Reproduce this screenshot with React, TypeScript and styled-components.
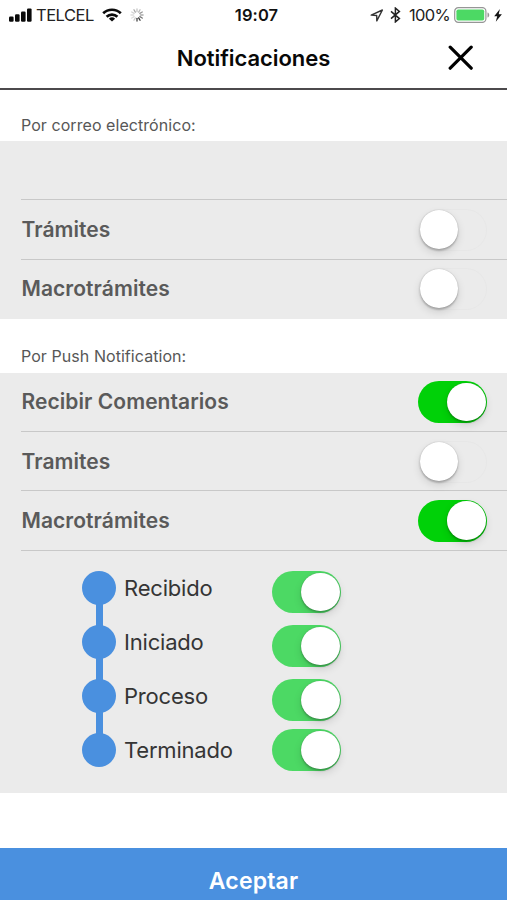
import React, { useState } from 'react';
import styled, { createGlobalStyle } from 'styled-components';

const GlobalStyle = createGlobalStyle`
  * { box-sizing: border-box; }
  body {
    margin: 0;
    background: #fff;
    font-family: Inter, "Liberation Sans", sans-serif;
    overflow: hidden;
  }
  button { font-family: inherit; border: 0; padding: 0; background: none; }
`;

const Screen = styled.main`
  width: 507px;
  height: 900px;
  display: flex;
  flex-direction: column;
  background: #fff;
`;

const StatusBar = styled.div`
  height: 30px;
  flex: none;
  display: grid;
  grid-template-columns: 1fr auto 1fr;
  align-items: center;
  padding: 0 5px 0 8px;
  color: #222;
  font-size: 16.5px;
  line-height: 30px;
`;

const StatusSide = styled.div<{ $end?: boolean }>`
  display: flex;
  align-items: center;
  justify-content: ${(p) => (p.$end ? 'flex-end' : 'flex-start')};
  svg { flex: none; }
`;

const Carrier = styled.span`
  margin: 0 8px 0 3px;
  width: 58px;
  letter-spacing: -0.5px;
`;

const Clock = styled.span`
  color: #111;
  font-weight: 600;
  font-size: 16.5px;
  letter-spacing: 0.1px;
  padding-left: 3px;
`;

const Percent = styled.span`
  width: 40px;
  margin: 0 5px 0 8px;
  letter-spacing: -0.65px;
  white-space: nowrap;
`;

const Header = styled.header`
  height: 60px;
  flex: none;
  display: grid;
  grid-template-columns: 60px 1fr 60px;
  align-items: center;
  border-bottom: 2px solid #4c4a4c;
  padding-bottom: 2px;
`;

const Title = styled.h1`
  grid-column: 2;
  margin: 0;
  text-align: center;
  font-size: 22px;
  line-height: 30px;
  font-weight: 600;
  color: #080808;
  letter-spacing: -0.06px;
`;

const CloseButton = styled.button`
  width: 26px;
  height: 26px;
  margin-left: 1px;
  svg { display: block; }
`;

const SectionLabel = styled.h2<{ $height: number; $bottom: number }>`
  height: ${(p) => p.$height}px;
  flex: none;
  display: flex;
  align-items: flex-end;
  margin: 0;
  padding: 0 21px ${(p) => p.$bottom}px;
  font-size: 16px;
  line-height: 20px;
  font-weight: 400;
  color: #575757;
  letter-spacing: 0.06px;
`;

const Panel = styled.section`
  flex: none;
  background: #ebebeb;
`;

const Row = styled.div<{ $height: number; $top?: number; $bottom?: number; $last?: boolean }>`
  height: ${(p) => p.$height}px;
  margin-left: 21px;
  padding: ${(p) => p.$top ?? 0}px 20px ${(p) => p.$bottom ?? 0}px 0.5px;
  display: flex;
  align-items: center;
  justify-content: space-between;
  border-bottom: ${(p) => (p.$last ? '0' : '1px solid #c8c8c8')};
`;

const RowText = styled.span`
  font-size: 21px;
  line-height: 26px;
  font-weight: 600;
  color: #5a5a5a;
  letter-spacing: 0.06px;
`;

const Track = styled.button<{ $on: boolean; $color: string }>`
  width: 69px;
  height: 42px;
  flex: none;
  display: flex;
  align-items: center;
  justify-content: ${(p) => (p.$on ? 'flex-end' : 'flex-start')};
  padding: 0 1.5px;
  border-radius: 21px;
  background: ${(p) => (p.$on ? p.$color : '#ebebeb')};
  box-shadow: ${(p) => (p.$on ? 'none' : 'inset 0 0 0 1px #e7e7e7')};
`;

const Knob = styled.span`
  width: 38.5px;
  height: 38.5px;
  border-radius: 50%;
  background: #fff;
  box-shadow: 0 2px 2px rgba(0, 0, 0, 0.2), 0 4px 8px rgba(0, 0, 0, 0.12), 0 0 1px rgba(0, 0, 0, 0.3);
`;

const Steps = styled.div`
  height: 242px;
  padding: 20px 0 0 82px;
  display: grid;
  grid-template-columns: 34px 140px 69px;
  column-gap: 8px;
  align-items: start;
`;

const Timeline = styled.div`
  display: flex;
  flex-direction: column;
  align-items: center;
`;

const Dot = styled.i`
  width: 34px;
  height: 34px;
  border-radius: 50%;
  background: #4a90df;
`;

const Connector = styled.i`
  width: 7px;
  height: 24px;
  margin: -2px 0;
  background: #4a90df;
`;

const StepNames = styled.div`
  display: flex;
  flex-direction: column;
  gap: 20px;
`;

const StepName = styled.span`
  height: 34px;
  line-height: 34px;
  font-size: 22px;
  color: #353535;
  letter-spacing: -0.2px;
`;

const StepSwitches = styled.div`
  display: flex;
  flex-direction: column;
  gap: 12px;
  & > :last-child { margin-top: -4px; }
`;

const AcceptButton = styled.button`
  height: 52px;
  flex: none;
  margin-top: auto;
  padding-top: 13px;
  background: #4a90df;
  color: #fff;
  font-size: 23px;
  font-weight: 600;
  letter-spacing: 0.15px;
`;

function Switch({ initial, color = '#00d108' }: { initial: boolean; color?: string }) {
  const [on, setOn] = useState(initial);
  return (
    <Track role="switch" aria-checked={on} $on={on} $color={color} onClick={() => setOn(!on)}>
      <Knob />
    </Track>
  );
}

const SignalIcon = () => (
  <svg width="25" height="14" viewBox="0 0 25 14" fill="#0a0a0a">
    <rect x="1" y="8.5" width="4.6" height="5.2" rx="1.2" />
    <rect x="7" y="6.3" width="4.6" height="7.4" rx="1.2" />
    <rect x="13" y="3.6" width="4.6" height="10.1" rx="1.2" />
    <rect x="19" y="0.4" width="4.6" height="13.3" rx="1.2" />
  </svg>
);

const WifiIcon = () => (
  <svg width="20" height="14" viewBox="0 0 20 14" fill="none" stroke="#0a0a0a" strokeWidth="2.7">
    <path d="M1.2 5.3a12.7 12.7 0 0 1 17.6 0" />
    <path d="M4.6 8.8a7.8 7.8 0 0 1 10.8 0" />
    <path d="M10 13.6 6.9 10.7a4.5 4.5 0 0 1 6.2 0Z" fill="#0a0a0a" stroke="none" />
  </svg>
);

const SpinnerSvg = styled.svg`
  margin-left: 8px;
`;

const spokes = ['#c4c4c4', '#bbb', '#999', '#aaa', '#777', '#333', '#444', '#ccc', '#ddd', '#ddd', '#d2d2d2', '#aaa'];

const SpinnerIcon = () => (
  <SpinnerSvg width="14" height="14" viewBox="0 0 14 14" strokeWidth="1.3" strokeLinecap="round">
    {spokes.map((color, i) => (
      <path key={i} d="M7 0.9V3.7" stroke={color} transform={`rotate(${i * 30} 7 7)`} />
    ))}
  </SpinnerSvg>
);

const LocationSvg = styled.svg`
  margin-right: 6px;
`;

const LocationIcon = () => (
  <LocationSvg width="14" height="13" viewBox="0 0 14 13" fill="none" stroke="#333" strokeWidth="1.4" strokeLinejoin="round">
    <path d="M12.4 1 1.2 6.1l5.5.4.1 5.4Z" />
  </LocationSvg>
);

const BluetoothIcon = () => (
  <svg width="11" height="16" viewBox="0 0 11 16" fill="none" stroke="#222" strokeWidth="1.5">
    <path d="m1 4.4 8.4 7.2-4 3.3V1.1l4 3.3L1 11.6" />
  </svg>
);

const BatteryIcon = () => (
  <svg width="36" height="16" viewBox="0 0 36 16">
    <rect x="0.7" y="0.7" width="31.2" height="14.6" rx="3.6" fill="#fff" stroke="#969696" strokeWidth="1.2" />
    <rect x="2.4" y="2.4" width="27.8" height="11.2" rx="1.8" fill="#4cd964" />
    <path d="M33.5 5.5c2.3.6 2.3 4.4 0 5Z" fill="#969696" />
  </svg>
);

const BoltSvg = styled.svg`
  margin-left: 4px;
`;

const BoltIcon = () => (
  <BoltSvg width="8" height="13" viewBox="0 0 8 13" fill="#151515">
    <path d="M5.9 0 .2 7.2h3L1.8 12.7 7.9 5.3H4.7Z" />
  </BoltSvg>
);

const steps = ['Recibido', 'Iniciado', 'Proceso', 'Terminado'];

export default function App() {
  return (
    <>
      <GlobalStyle />
      <Screen>
        <StatusBar>
          <StatusSide>
            <SignalIcon />
            <Carrier>TELCEL</Carrier>
            <WifiIcon />
            <SpinnerIcon />
          </StatusSide>
          <Clock>19:07</Clock>
          <StatusSide $end>
            <LocationIcon />
            <BluetoothIcon />
            <Percent>100%</Percent>
            <BatteryIcon />
            <BoltIcon />
          </StatusSide>
        </StatusBar>

        <Header>
          <Title>Notificaciones</Title>
          <CloseButton aria-label="Cerrar">
            <svg width="26" height="26" viewBox="0 0 26 26" stroke="#000" strokeWidth="3.2" strokeLinecap="round">
              <path d="M2.2 2.2 23.2 23.2M23.2 2.2 2.2 23.2" />
            </svg>
          </CloseButton>
        </Header>

        <SectionLabel $height={51} $bottom={6}>Por correo electrónico:</SectionLabel>
        <Panel>
          <Row $height={59} />
          <Row $height={60}>
            <RowText>Trámites</RowText>
            <Switch initial={false} />
          </Row>
          <Row $height={59} $bottom={2} $last>
            <RowText>Macrotrámites</RowText>
            <Switch initial={false} />
          </Row>
        </Panel>

        <SectionLabel $height={54} $bottom={7}>Por Push Notification:</SectionLabel>
        <Panel>
          <Row $height={59}>
            <RowText>Recibir Comentarios</RowText>
            <Switch initial />
          </Row>
          <Row $height={59} $top={1}>
            <RowText>Tramites</RowText>
            <Switch initial={false} />
          </Row>
          <Row $height={60}>
            <RowText>Macrotrámites</RowText>
            <Switch initial />
          </Row>
          <Steps>
            <Timeline>
              {steps.map((step, i) => (
                <React.Fragment key={step}>
                  {i > 0 && <Connector />}
                  <Dot />
                </React.Fragment>
              ))}
            </Timeline>
            <StepNames>
              {steps.map((step) => (
                <StepName key={step}>{step}</StepName>
              ))}
            </StepNames>
            <StepSwitches>
              {steps.map((step) => (
                <Switch key={step} initial color="#4cd964" />
              ))}
            </StepSwitches>
          </Steps>
        </Panel>

        <AcceptButton>Aceptar</AcceptButton>
      </Screen>
    </>
  );
}
